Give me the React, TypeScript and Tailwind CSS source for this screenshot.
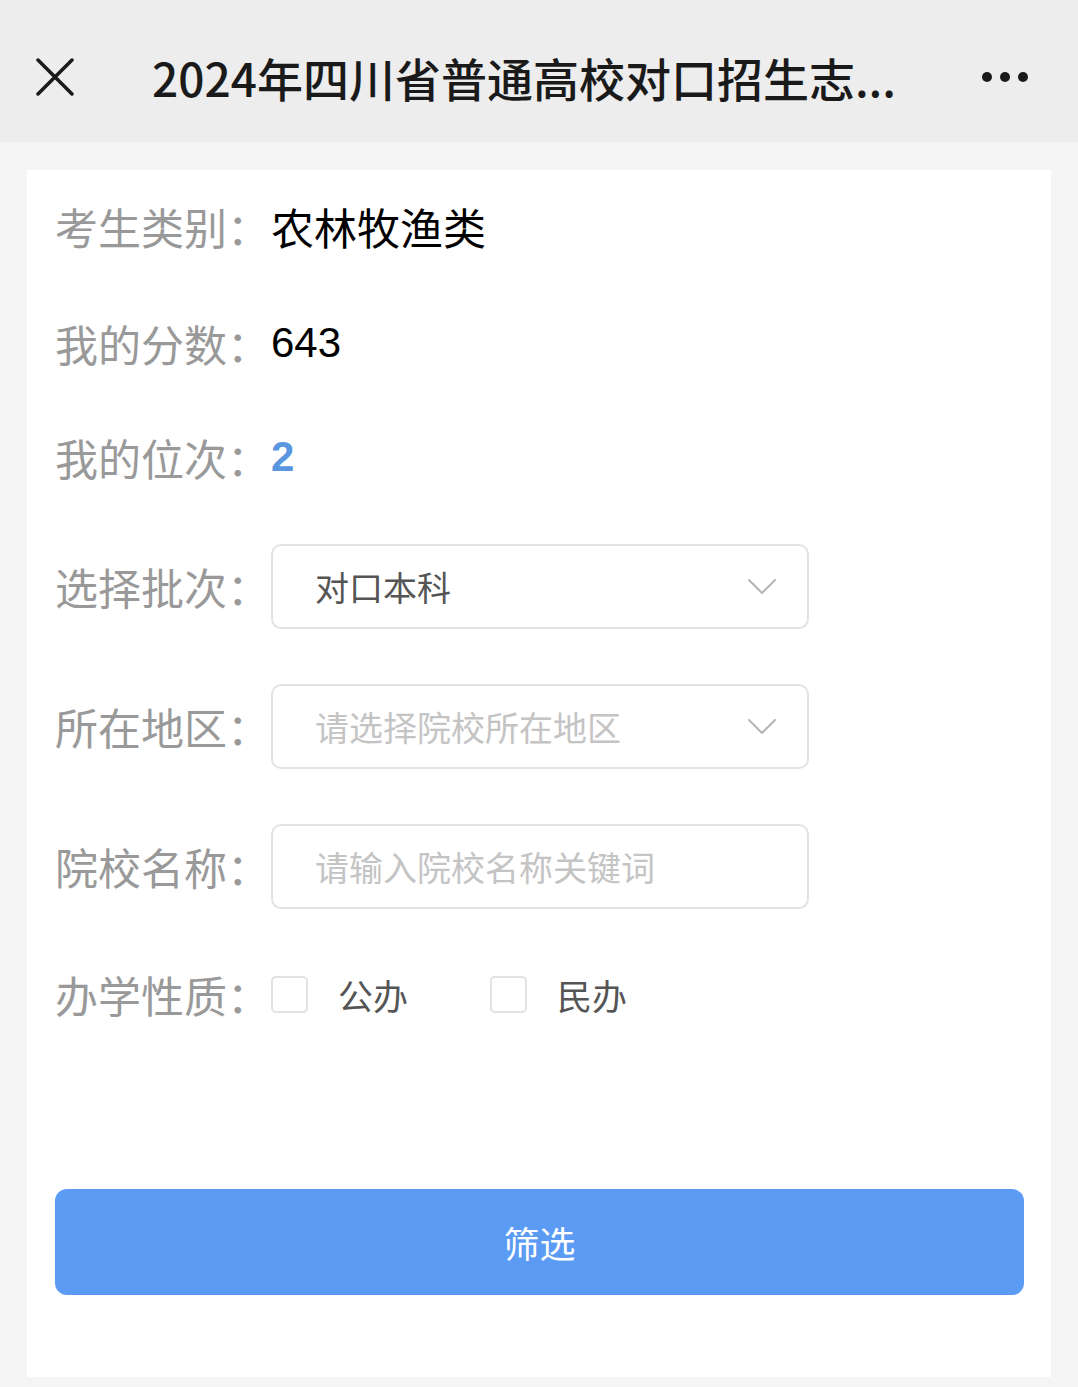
import React from 'react';

const font = { fontFamily: '"Noto Sans CJK SC", "Noto Sans", sans-serif' };

function Chevron() {
  return (
    <svg width="30" height="18" viewBox="0 0 30 18" fill="none" className="shrink-0">
      <path d="M2 2 L15 15 L28 2" stroke="#b5b5b5" strokeWidth="2" strokeLinecap="round" strokeLinejoin="round" />
    </svg>
  );
}

function Label({ children }: { children: React.ReactNode }) {
  return <div className="w-[216px] shrink-0 text-[43px] text-[#999999] leading-none">{children}</div>;
}

function Box({ text, placeholder, arrow }: { text: string; placeholder?: boolean; arrow?: boolean }) {
  return (
    <div className="w-[538px] h-[85px] border-2 border-[#e2e2e2] rounded-[10px] flex items-center justify-between pl-[42px] pr-[30px]">
      <span className={`text-[34px] leading-none ${placeholder ? 'text-[#c4c4c4]' : 'text-[#555555]'}`}>{text}</span>
      {arrow && <Chevron />}
    </div>
  );
}

function Check({ label }: { label: string }) {
  return (
    <div className="flex items-center">
      <div className="w-[37px] h-[37px] border-2 border-[#e2e2e2] rounded-[5px] bg-white" />
      <span className="ml-[30px] text-[35px] text-[#555555] leading-none">{label}</span>
    </div>
  );
}

export default function App() {
  return (
    <div className="w-[1078px] h-[1387px] bg-[#f5f5f5] overflow-hidden" style={font}>
      <div className="h-[142px] bg-[#ededed] flex items-center px-[36px] pt-[12px]">
        <svg width="38" height="38" viewBox="0 0 38 38" className="shrink-0">
          <path d="M2 2 L36 36 M36 2 L2 36" stroke="#1a1a1a" strokeWidth="3.5" strokeLinecap="round" />
        </svg>
        <div className="ml-[78px] text-[46px] font-medium text-[#1a1a1a] leading-none whitespace-nowrap">
          2024年四川省普通高校对口招生志...
        </div>
        <div className="ml-auto flex gap-[8px] pr-[14px]">
          <span className="w-[10px] h-[10px] rounded-full bg-[#1a1a1a]" />
          <span className="w-[10px] h-[10px] rounded-full bg-[#1a1a1a]" />
          <span className="w-[10px] h-[10px] rounded-full bg-[#1a1a1a]" />
        </div>
      </div>

      <div className="mx-[27px] mt-[28px] h-[1207px] bg-white pl-[28px] pr-[27px] pt-[32px] flex flex-col">
        <div className="h-[48px] flex items-center">
          <Label>考生类别：</Label>
          <span className="text-[43px] text-black leading-none">农林牧渔类</span>
        </div>
        <div className="h-[48px] mt-[69px] flex items-center">
          <Label>我的分数：</Label>
          <span className="text-[42px] text-black leading-none" style={{ fontFamily: '"Liberation Sans", sans-serif' }}>643</span>
        </div>
        <div className="h-[48px] mt-[66px] flex items-center">
          <Label>我的位次：</Label>
          <span className="text-[42px] font-bold text-[#5a96e0] leading-none" style={{ fontFamily: '"Liberation Sans", sans-serif' }}>2</span>
        </div>
        <div className="mt-[63px] flex items-center">
          <Label>选择批次：</Label>
          <Box text="对口本科" arrow />
        </div>
        <div className="mt-[55px] flex items-center">
          <Label>所在地区：</Label>
          <Box text="请选择院校所在地区" placeholder arrow />
        </div>
        <div className="mt-[55px] flex items-center">
          <Label>院校名称：</Label>
          <Box text="请输入院校名称关键词" placeholder />
        </div>
        <div className="mt-[64px] flex items-center">
          <Label>办学性质：</Label>
          <div className="flex items-center gap-[82px]">
            <Check label="公办" />
            <Check label="民办" />
          </div>
        </div>

        <button className="mt-[173px] h-[106px] w-full rounded-[12px] bg-[#5b9bf4] text-white text-[36px] leading-none">
          筛选
        </button>
      </div>
    </div>
  );
}
